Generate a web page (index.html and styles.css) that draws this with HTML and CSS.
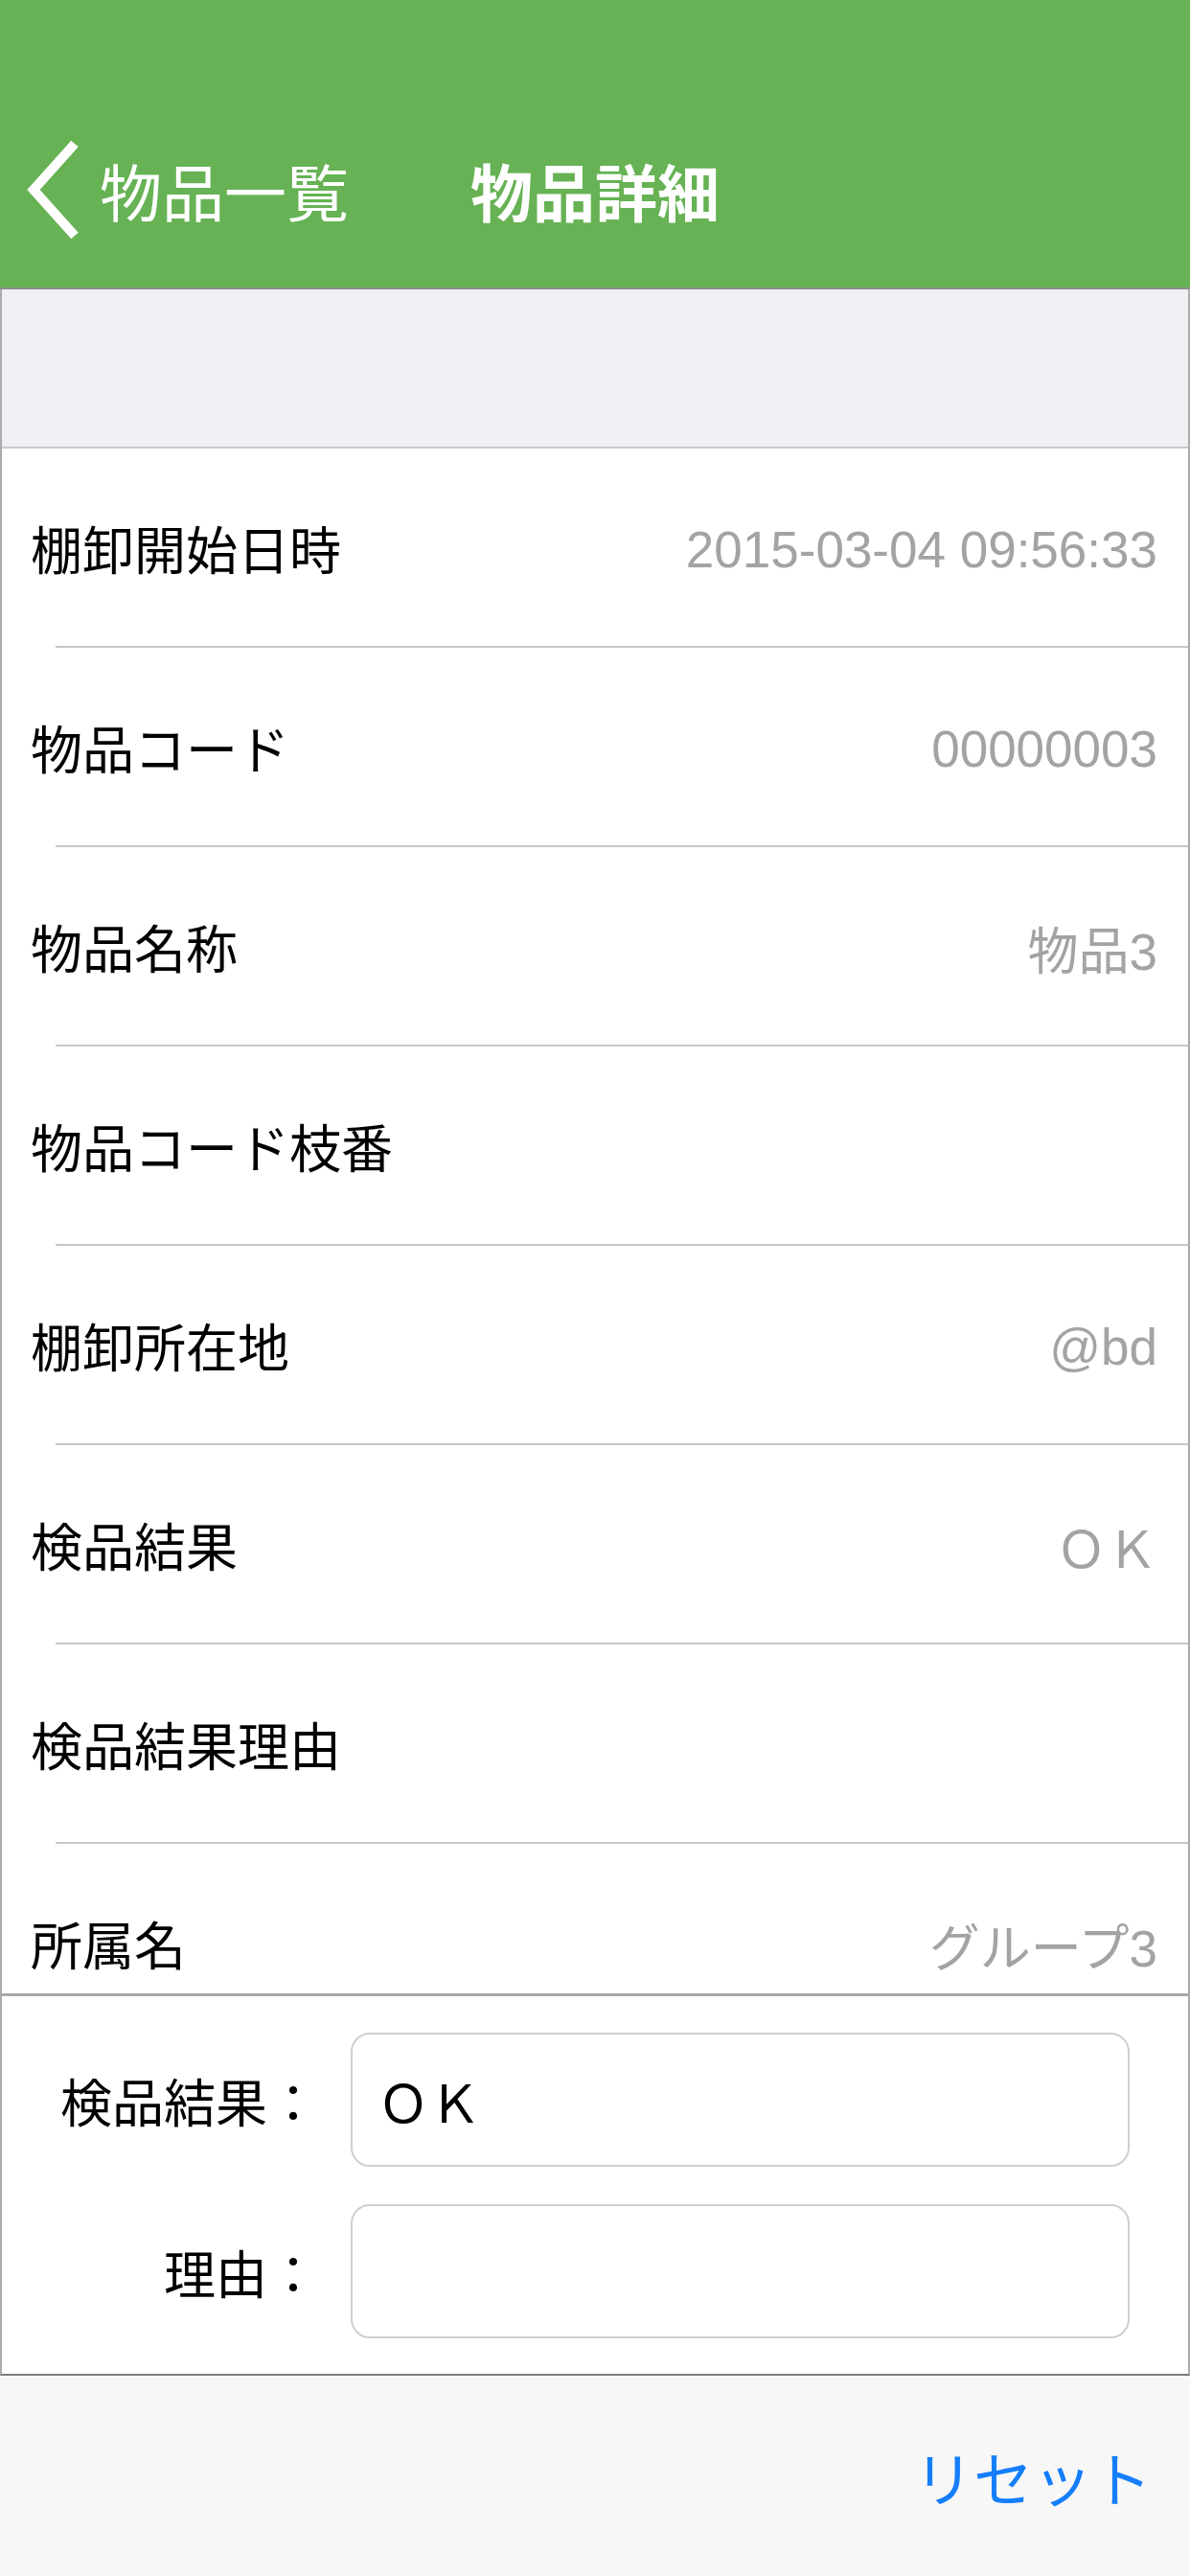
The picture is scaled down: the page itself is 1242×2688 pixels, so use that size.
FILE: index.html
```html
<!DOCTYPE html>
<html lang="ja">
<head>
  <meta charset="UTF-8">
  <meta name="viewport" content="width=device-width, initial-scale=1.0">
  <title>物品詳細</title>
  <link rel="stylesheet" href="styles.css">
</head>
<body>
  <div class="page">
    <header class="header">
      <div class="navbar">
        <a class="back" href="#">
          <svg class="chevron" width="56" height="104" viewBox="0 0 56 104">
            <polyline points="50,4 7,52 50,100" fill="none" stroke="#fff" stroke-width="10" stroke-linejoin="miter"/>
          </svg>
          <span>物品一覧</span>
        </a>
        <h1 class="title">物品詳細</h1>
        <div></div>
      </div>
    </header>

    <div class="list">
      <div class="list-top"></div>
      <div class="row"><span class="label">棚卸開始日時</span><span class="value">2015-03-04 09:56:33</span></div>
      <div class="row"><span class="label">物品コード</span><span class="value">00000003</span></div>
      <div class="row"><span class="label">物品名称</span><span class="value">物品3</span></div>
      <div class="row"><span class="label">物品コード枝番</span><span class="value"></span></div>
      <div class="row"><span class="label">棚卸所在地</span><span class="value">@bd</span></div>
      <div class="row"><span class="label">検品結果</span><span class="value">ＯＫ</span></div>
      <div class="row"><span class="label">検品結果理由</span><span class="value"></span></div>
      <div class="row"><span class="label">所属名</span><span class="value">グループ3</span></div>
    </div>

    <form class="form">
      <label class="form-label" for="result">検品結果：</label>
      <input class="form-input" id="result" type="text" value="ＯＫ">
      <label class="form-label" for="reason">理由：</label>
      <input class="form-input" id="reason" type="text" value="">
    </form>

    <footer class="toolbar">
      <button class="reset" type="button">リセット</button>
    </footer>
  </div>
</body>
</html>
```

FILE: styles.css
```css
body {
  margin: 0;
  padding: 0;
  font-family: "Liberation Sans", "Noto Sans CJK JP", sans-serif;
  color: #000;
  background: #fff;
}

.page {
  display: flex;
  flex-direction: column;
  height: 100vh;
  overflow: hidden;
}

.header {
  flex: none;
  height: 302px;
  box-sizing: border-box;
  padding: 100px 0 6px;
  background: #66b254;
  border-bottom: 2px solid #8c8c8c;
}

.navbar {
  height: 196px;
  display: grid;
  grid-template-columns: 1fr auto 1fr;
  align-items: center;
}

.back {
  display: flex;
  align-items: center;
  gap: 20px;
  padding-left: 28px;
  color: #fff;
  text-decoration: none;
  font-size: 65px;
}

.chevron {
  display: block;
}

.title {
  margin: 0;
  color: #fff;
  font-size: 65px;
  font-weight: 700;
}

.list {
  flex: 1;
  min-height: 0;
  overflow: hidden;
  border-left: 2px solid #ababab;
  border-right: 2px solid #ababab;
}

.list-top {
  height: 164px;
  background: #efeff4;
  border-bottom: 2px solid #c8c7cc;
}

.row {
  height: 206px;
  display: flex;
  align-items: center;
  justify-content: space-between;
  padding: 0 32px 0 30px;
  border-bottom: 2px solid transparent;
  background: linear-gradient(#c8c7cc, #c8c7cc) no-repeat 56px 100% / calc(100% - 56px) 2px;
  background-origin: border-box;
}

.label {
  font-size: 54px;
}

.value {
  font-size: 53px;
  color: #a3a3a3;
  padding-top: 4px;
}

.form {
  flex: none;
  margin: 0;
  display: grid;
  grid-template-columns: 331px 813px;
  column-gap: 33px;
  row-gap: 39px;
  align-items: center;
  padding: 38px 0 37px;
  border-top: 3px solid #a9a9a9;
  border-bottom: 2px solid #7a7a7a;
  border-left: 2px solid #ababab;
  border-right: 2px solid #ababab;
}

.form-label {
  text-align: right;
  font-size: 54px;
}

.form-input {
  height: 140px;
  box-sizing: border-box;
  margin: 0;
  padding: 0 26px;
  border: 2px solid #cfcfcf;
  border-radius: 20px;
  background: #fff;
  font-family: "Liberation Sans", "Noto Sans CJK JP", sans-serif;
  font-size: 54px;
  color: #000;
  outline: none;
}

.toolbar {
  flex: none;
  height: 209px;
  display: flex;
  align-items: center;
  justify-content: flex-end;
  padding-right: 40px;
  background: #f7f7f7;
}

.reset {
  padding: 0;
  border: none;
  background: none;
  font-family: "Liberation Sans", "Noto Sans CJK JP", sans-serif;
  font-size: 62px;
  color: #157efb;
  cursor: pointer;
}
```
